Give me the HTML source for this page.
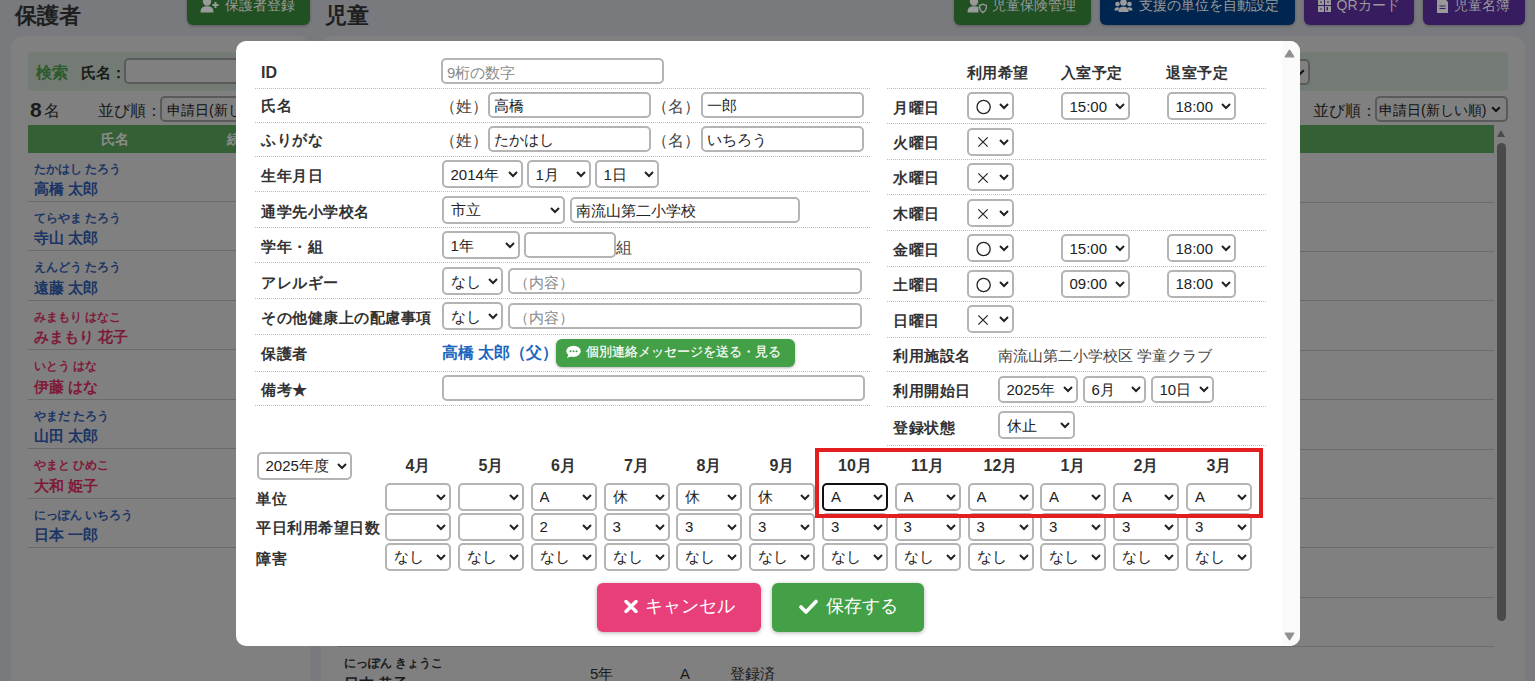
<!DOCTYPE html>
<html lang="ja"><head><meta charset="utf-8"><title>児童</title>
<style>
html,body{margin:0;padding:0;width:1535px;height:681px;overflow:hidden;background:#797a7e;font-family:"Liberation Sans",sans-serif;}
.a{position:absolute;box-sizing:border-box;margin:0}
.t{white-space:nowrap}
select.s{border:2px solid #b4b4b4;border-radius:5px;background:#fff;color:#222;font-family:"Liberation Sans",sans-serif;padding:0 0 0 3px;outline:none}
input.i{border:2px solid #b4b4b4;border-radius:5px;background:#fff;color:#222;font-family:"Liberation Sans",sans-serif;padding:3px 0 0 4px;outline:none}
input.i::placeholder{color:#8a8a8a}
.dl{position:absolute;height:0;border-top:1px dotted #bdbdbd}
</style></head><body>

<div class="a t" style="left:15px;top:-6.50px;height:44px;line-height:44px;font-size:22px;font-weight:bold;color:#1e1e1e;">保護者</div>
<div class="a" style="left:187px;top:-12px;width:123px;height:37px;background:#215023;border-radius:6px;box-shadow:0 1px 3px rgba(0,0,0,.25)"></div>
<div class="a t" style="left:225px;top:-8.80px;height:28px;line-height:28px;font-size:14px;font-weight:normal;color:#9a9a9a;">保護者登録</div>
<svg class="a" style="left:200px;top:-2px" width="20" height="16" viewBox="0 0 20 16"><circle cx="7" cy="3.5" r="4.2" fill="#9a9a9a"/><path d="M0.5 14.5 C0.5 9.5 3 8.2 7 8.2 C11 8.2 13.5 9.5 13.5 14.5 Z" fill="#9a9a9a"/><path d="M15.5 4 V10 M12.5 7 H18.5" stroke="#9a9a9a" stroke-width="2"/></svg>
<div class="a t" style="left:325px;top:-6.50px;height:44px;line-height:44px;font-size:22px;font-weight:bold;color:#1e1e1e;">児童</div>
<div class="a" style="left:954px;top:-12px;width:137px;height:37px;background:#215023;border-radius:6px;box-shadow:0 1px 3px rgba(0,0,0,.25)"></div>
<div class="a t" style="left:992px;top:-8.80px;height:28px;line-height:28px;font-size:14px;font-weight:normal;color:#9a9a9a;">児童保険管理</div>
<svg class="a" style="left:967px;top:-2px" width="20" height="16" viewBox="0 0 20 16"><circle cx="7" cy="3.5" r="4.2" fill="#9a9a9a"/><path d="M0.5 14.5 C0.5 9.5 3 8.2 7 8.2 C9 8.2 10.5 8.5 11.5 9 L11.5 14.5 Z" fill="#9a9a9a"/><path d="M12.5 7.5 L16 6.2 L19.5 7.5 C19.5 11 18 13.5 16 14.5 C14 13.5 12.5 11 12.5 7.5 Z" fill="none" stroke="#9a9a9a" stroke-width="1.4"/></svg>
<div class="a" style="left:1100px;top:-12px;width:195px;height:37px;background:#00264f;border-radius:6px;box-shadow:0 1px 3px rgba(0,0,0,.25)"></div>
<div class="a t" style="left:1138.5px;top:-9.00px;height:28.4px;line-height:28.4px;font-size:14.2px;font-weight:normal;color:#9a9a9a;">支援の単位を自動設定</div>
<svg class="a" style="left:1114px;top:-1px" width="19" height="14" viewBox="0 0 19 14"><circle cx="9.5" cy="3.5" r="3.3" fill="#9a9a9a"/><circle cx="3.5" cy="5" r="2.3" fill="#9a9a9a"/><circle cx="15.5" cy="5" r="2.3" fill="#9a9a9a"/><path d="M4.5 13 C4.5 9 6.5 7.8 9.5 7.8 C12.5 7.8 14.5 9 14.5 13 Z" fill="#9a9a9a"/><path d="M0.5 11.5 C0.5 9 1.5 8.2 3.5 8.2 C4.5 8.2 5 8.4 5.5 8.8 L4.2 11.5 Z M18.5 11.5 C18.5 9 17.5 8.2 15.5 8.2 C14.5 8.2 14 8.4 13.5 8.8 L14.8 11.5 Z" fill="#9a9a9a"/></svg>
<div class="a" style="left:1304px;top:-12px;width:110px;height:37px;background:#371d5f;border-radius:6px;box-shadow:0 1px 3px rgba(0,0,0,.25)"></div>
<div class="a t" style="left:1336.5px;top:-8.80px;height:28px;line-height:28px;font-size:14px;font-weight:normal;color:#9a9a9a;">QRカード</div>
<svg class="a" style="left:1318px;top:-1px" width="14" height="14" viewBox="0 0 14 14"><rect x="0" y="0" width="6" height="6" fill="#9a9a9a"/><rect x="7" y="0" width="6" height="6" fill="#9a9a9a"/><rect x="0" y="7" width="6" height="6" fill="#9a9a9a"/><path d="M7 7 H13 V13 H7 Z" fill="#9a9a9a"/><rect x="2.3" y="2.3" width="1.4" height="1.4" fill="#371d5f"/><rect x="9.3" y="2.3" width="1.4" height="1.4" fill="#371d5f"/><rect x="2.3" y="9.3" width="1.4" height="1.4" fill="#371d5f"/><rect x="8.5" y="8" width="1.5" height="3.5" fill="#371d5f"/></svg>
<div class="a" style="left:1423px;top:-12px;width:102px;height:37px;background:#371d5f;border-radius:6px;box-shadow:0 1px 3px rgba(0,0,0,.25)"></div>
<div class="a t" style="left:1453.5px;top:-8.80px;height:28px;line-height:28px;font-size:14px;font-weight:normal;color:#9a9a9a;">児童名簿</div>
<svg class="a" style="left:1437px;top:-2px" width="11" height="15" viewBox="0 0 11 15"><path d="M0 0 H7 L11 4 V15 H0 Z" fill="#9a9a9a"/><path d="M2.5 8 H8.5 M2.5 10.5 H8.5" stroke="#371d5f" stroke-width="1"/></svg>
<div class="a" style="left:11px;top:36px;width:299px;height:764px;background:#808080;border-radius:12px"></div>
<div class="a" style="left:28px;top:52px;width:265px;height:39px;background:#747a74;border-radius:4px"></div>
<div class="a t" style="left:36px;top:56.50px;height:32px;line-height:32px;font-size:16px;font-weight:bold;color:#2a5a2c;">検索</div>
<div class="a t" style="left:81px;top:58.00px;height:30px;line-height:30px;font-size:15px;font-weight:bold;color:#1a1a1a;">氏名：</div>
<div class="a" style="left:124px;top:58px;width:169px;height:26px;border:2px solid #5a5a5a;border-radius:5px;background:#808080"></div>
<div class="a t" style="left:30px;top:88.50px;height:42px;line-height:42px;font-size:21px;font-weight:bold;color:#1a1a1a;">8</div>
<div class="a t" style="left:44px;top:95.00px;height:32px;line-height:32px;font-size:16px;font-weight:normal;color:#1a1a1a;">名</div>
<div class="a t" style="left:98px;top:94.50px;height:32px;line-height:32px;font-size:16px;font-weight:normal;color:#1a1a1a;">並び順：</div>
<div class="a" style="left:160px;top:96px;width:133px;height:26px;border:2px solid #5a5a5a;border-radius:5px;background:#808080"></div>
<div class="a t" style="left:167px;top:96.20px;height:28px;line-height:28px;font-size:14px;font-weight:normal;color:#111;">申請日(新しい順)</div>
<div class="a" style="left:28px;top:125px;width:265px;height:28px;background:#356035"></div>
<div class="a t" style="left:-85px;width:400px;text-align:center;top:125.00px;height:28px;line-height:28px;font-size:14px;font-weight:bold;color:#8a8a8a;">氏名</div>
<div class="a t" style="left:227px;top:125.00px;height:28px;line-height:28px;font-size:14px;font-weight:bold;color:#8a8a8a;">続柄</div>
<div class="a t" style="left:34px;top:156.50px;height:24px;line-height:24px;font-size:12px;font-weight:bold;color:#1a3564;">たかはし たろう</div>
<div class="a t" style="left:34px;top:174.00px;height:30px;line-height:30px;font-size:15px;font-weight:bold;color:#1a3564;">高橋 太郎</div>
<div class="a" style="left:28px;top:201px;width:265px;height:1px;background:#6b6b6b"></div>
<div class="a t" style="left:34px;top:205.95px;height:24px;line-height:24px;font-size:12px;font-weight:bold;color:#1a3564;">てらやま たろう</div>
<div class="a t" style="left:34px;top:223.45px;height:30px;line-height:30px;font-size:15px;font-weight:bold;color:#1a3564;">寺山 太郎</div>
<div class="a" style="left:28px;top:250px;width:265px;height:1px;background:#6b6b6b"></div>
<div class="a t" style="left:34px;top:255.40px;height:24px;line-height:24px;font-size:12px;font-weight:bold;color:#1a3564;">えんどう たろう</div>
<div class="a t" style="left:34px;top:272.90px;height:30px;line-height:30px;font-size:15px;font-weight:bold;color:#1a3564;">遠藤 太郎</div>
<div class="a" style="left:28px;top:300px;width:265px;height:1px;background:#6b6b6b"></div>
<div class="a t" style="left:34px;top:304.85px;height:24px;line-height:24px;font-size:12px;font-weight:bold;color:#7e1a38;">みまもり はなこ</div>
<div class="a t" style="left:34px;top:322.35px;height:30px;line-height:30px;font-size:15px;font-weight:bold;color:#7e1a38;">みまもり 花子</div>
<div class="a" style="left:28px;top:349px;width:265px;height:1px;background:#6b6b6b"></div>
<div class="a t" style="left:34px;top:354.30px;height:24px;line-height:24px;font-size:12px;font-weight:bold;color:#7e1a38;">いとう はな</div>
<div class="a t" style="left:34px;top:371.80px;height:30px;line-height:30px;font-size:15px;font-weight:bold;color:#7e1a38;">伊藤 はな</div>
<div class="a" style="left:28px;top:399px;width:265px;height:1px;background:#6b6b6b"></div>
<div class="a t" style="left:34px;top:403.75px;height:24px;line-height:24px;font-size:12px;font-weight:bold;color:#1a3564;">やまだ たろう</div>
<div class="a t" style="left:34px;top:421.25px;height:30px;line-height:30px;font-size:15px;font-weight:bold;color:#1a3564;">山田 太郎</div>
<div class="a" style="left:28px;top:448px;width:265px;height:1px;background:#6b6b6b"></div>
<div class="a t" style="left:34px;top:453.20px;height:24px;line-height:24px;font-size:12px;font-weight:bold;color:#7e1a38;">やまと ひめこ</div>
<div class="a t" style="left:34px;top:470.70px;height:30px;line-height:30px;font-size:15px;font-weight:bold;color:#7e1a38;">大和 姫子</div>
<div class="a" style="left:28px;top:498px;width:265px;height:1px;background:#6b6b6b"></div>
<div class="a t" style="left:34px;top:502.65px;height:24px;line-height:24px;font-size:12px;font-weight:bold;color:#1a3564;">にっぽん いちろう</div>
<div class="a t" style="left:34px;top:520.15px;height:30px;line-height:30px;font-size:15px;font-weight:bold;color:#1a3564;">日本 一郎</div>
<div class="a" style="left:28px;top:547px;width:265px;height:1px;background:#6b6b6b"></div>
<div class="a" style="left:321px;top:36px;width:1204px;height:764px;background:#808080;border-radius:12px"></div>
<div class="a" style="left:338px;top:52px;width:1170px;height:39px;background:#747a74;border-radius:4px"></div>
<div class="a" style="left:1200px;top:59px;width:110px;height:26px;border:2px solid #5a5a5a;border-radius:5px;background:#808080"></div>
<div class="a t" style="left:1313px;top:94.50px;height:32px;line-height:32px;font-size:16px;font-weight:normal;color:#1a1a1a;">並び順：</div>
<div class="a" style="left:1375px;top:96px;width:133px;height:26px;border:2px solid #5a5a5a;border-radius:5px;background:#808080"></div>
<div class="a t" style="left:1379px;top:96.20px;height:28px;line-height:28px;font-size:14px;font-weight:normal;color:#111;">申請日(新しい順)</div>
<svg class="a" style="left:1491px;top:106px" width="10" height="7" viewBox="0 0 10 7"><path d="M1.2 1.2 L5 5 L8.8 1.2" stroke="#111" stroke-width="2" fill="none"/></svg>
<svg class="a" style="left:1295px;top:69px" width="10" height="7" viewBox="0 0 10 7"><path d="M1.2 1.2 L5 5 L8.8 1.2" stroke="#111" stroke-width="2" fill="none"/></svg>
<div class="a" style="left:338px;top:125px;width:1156px;height:28px;background:#356035"></div>
<div class="a" style="left:1497px;top:130px;width:0;height:0;border-left:4.5px solid transparent;border-right:4.5px solid transparent;border-bottom:7px solid #4a4a4a"></div>
<div class="a" style="left:1497px;top:143px;width:9px;height:478px;background:#4a4a4a;border-radius:5px"></div>
<div class="a" style="left:338px;top:202px;width:1156px;height:1px;background:#6b6b6b"></div>
<div class="a" style="left:338px;top:251px;width:1156px;height:1px;background:#6b6b6b"></div>
<div class="a" style="left:338px;top:300px;width:1156px;height:1px;background:#6b6b6b"></div>
<div class="a" style="left:338px;top:350px;width:1156px;height:1px;background:#6b6b6b"></div>
<div class="a" style="left:338px;top:399px;width:1156px;height:1px;background:#6b6b6b"></div>
<div class="a" style="left:338px;top:449px;width:1156px;height:1px;background:#6b6b6b"></div>
<div class="a" style="left:338px;top:498px;width:1156px;height:1px;background:#6b6b6b"></div>
<div class="a" style="left:338px;top:547px;width:1156px;height:1px;background:#6b6b6b"></div>
<div class="a" style="left:338px;top:597px;width:1156px;height:1px;background:#6b6b6b"></div>
<div class="a" style="left:338px;top:646px;width:1156px;height:1px;background:#6b6b6b"></div>
<div class="a t" style="left:344px;top:650.50px;height:24px;line-height:24px;font-size:12px;font-weight:bold;color:#1a1a1a;">にっぽん きょうこ</div>
<div class="a t" style="left:344px;top:669.00px;height:30px;line-height:30px;font-size:15px;font-weight:bold;color:#1a1a1a;">日本 恭子</div>
<div class="a t" style="left:590px;top:659.00px;height:30px;line-height:30px;font-size:15px;font-weight:normal;color:#1a1a1a;">5年</div>
<div class="a t" style="left:680px;top:659.00px;height:30px;line-height:30px;font-size:15px;font-weight:normal;color:#1a1a1a;">A</div>
<div class="a t" style="left:730px;top:659.00px;height:30px;line-height:30px;font-size:15px;font-weight:normal;color:#1a1a1a;">登録済</div>
<div class="a" style="left:236px;top:41px;width:1064px;height:605px;background:#fff;border-radius:10px;overflow:hidden">
<div class="a" style="left:1046px;top:0;width:18px;height:605px;background:#fafafa"></div>
<svg class="a" style="left:1048px;top:7.5px" width="11" height="9" viewBox="0 0 11 9"><path d="M5.5 1.2 L9.8 7.8 L1.2 7.8 Z" fill="#8f8f8f" stroke="#8f8f8f" stroke-width="1.2" stroke-linejoin="round"/></svg>
<svg class="a" style="left:1048px;top:590.5px" width="11" height="9" viewBox="0 0 11 9"><path d="M5.5 7.8 L9.8 1.2 L1.2 1.2 Z" fill="#8f8f8f" stroke="#8f8f8f" stroke-width="1.2" stroke-linejoin="round"/></svg>
</div>
<div class="dl" style="left:255px;top:88px;width:615px"></div>
<div class="dl" style="left:255px;top:122px;width:615px"></div>
<div class="dl" style="left:255px;top:156px;width:615px"></div>
<div class="dl" style="left:255px;top:191px;width:615px"></div>
<div class="dl" style="left:255px;top:227px;width:615px"></div>
<div class="dl" style="left:255px;top:262px;width:615px"></div>
<div class="dl" style="left:255px;top:298px;width:615px"></div>
<div class="dl" style="left:255px;top:334px;width:615px"></div>
<div class="dl" style="left:255px;top:371px;width:615px"></div>
<div class="dl" style="left:255px;top:405px;width:615px"></div>
<div class="dl" style="left:887px;top:88px;width:379px"></div>
<div class="dl" style="left:887px;top:123px;width:379px"></div>
<div class="dl" style="left:887px;top:159px;width:379px"></div>
<div class="dl" style="left:887px;top:194px;width:379px"></div>
<div class="dl" style="left:887px;top:230px;width:379px"></div>
<div class="dl" style="left:887px;top:266px;width:379px"></div>
<div class="dl" style="left:887px;top:301px;width:379px"></div>
<div class="dl" style="left:887px;top:337px;width:379px"></div>
<div class="dl" style="left:887px;top:371px;width:379px"></div>
<div class="dl" style="left:887px;top:406px;width:379px"></div>
<div class="dl" style="left:887px;top:445px;width:379px"></div>
<div class="a t" style="left:261px;top:57.30px;height:32px;line-height:32px;font-size:16px;font-weight:bold;color:#333;">ID</div>
<div class="a t" style="left:261px;top:91.40px;height:30px;line-height:30px;font-size:15px;font-weight:bold;color:#333;letter-spacing:.5px">氏名</div>
<div class="a t" style="left:261px;top:124.60px;height:30px;line-height:30px;font-size:15px;font-weight:bold;color:#333;letter-spacing:.5px">ふりがな</div>
<div class="a t" style="left:261px;top:160.60px;height:30px;line-height:30px;font-size:15px;font-weight:bold;color:#333;letter-spacing:.5px">生年月日</div>
<div class="a t" style="left:261px;top:196.60px;height:30px;line-height:30px;font-size:15px;font-weight:bold;color:#333;letter-spacing:.5px">通学先小学校名</div>
<div class="a t" style="left:261px;top:231.60px;height:30px;line-height:30px;font-size:15px;font-weight:bold;color:#333;letter-spacing:.5px">学年・組</div>
<div class="a t" style="left:261px;top:267.60px;height:30px;line-height:30px;font-size:15px;font-weight:bold;color:#333;letter-spacing:.5px">アレルギー</div>
<div class="a t" style="left:261px;top:302.60px;height:30px;line-height:30px;font-size:15px;font-weight:bold;color:#333;letter-spacing:.5px">その他健康上の配慮事項</div>
<div class="a t" style="left:261px;top:339.10px;height:30px;line-height:30px;font-size:15px;font-weight:bold;color:#333;letter-spacing:.5px">保護者</div>
<div class="a t" style="left:261px;top:375.10px;height:30px;line-height:30px;font-size:15px;font-weight:bold;color:#333;letter-spacing:.5px">備考★</div>
<input class="a i" style="left:441px;top:58.00px;width:222.50px;height:26.00px;font-size:15px;border-color:#b4b4b4;" value="" placeholder="9桁の数字">
<div class="a t" style="left:440px;top:91.40px;height:32px;line-height:32px;font-size:16px;font-weight:normal;color:#444;">（姓）</div>
<input class="a i" style="left:487.5px;top:92.00px;width:163.00px;height:26.00px;font-size:15px;border-color:#b4b4b4;" value="高橋" placeholder="">
<div class="a t" style="left:652px;top:91.40px;height:32px;line-height:32px;font-size:16px;font-weight:normal;color:#444;">（名）</div>
<input class="a i" style="left:701px;top:92.00px;width:162.50px;height:26.00px;font-size:15px;border-color:#b4b4b4;" value="一郎" placeholder="">
<div class="a t" style="left:440px;top:125.40px;height:32px;line-height:32px;font-size:16px;font-weight:normal;color:#444;">（姓）</div>
<input class="a i" style="left:487.5px;top:126.25px;width:163.00px;height:26.00px;font-size:15px;border-color:#b4b4b4;" value="たかはし" placeholder="">
<div class="a t" style="left:652px;top:125.40px;height:32px;line-height:32px;font-size:16px;font-weight:normal;color:#444;">（名）</div>
<input class="a i" style="left:701px;top:126.25px;width:162.50px;height:26.00px;font-size:15px;border-color:#b4b4b4;" value="いちろう" placeholder="">
<select class="a s" style="left:441.5px;top:160.25px;width:81.00px;height:27.50px;font-size:15px;border-color:#b4b4b4;"><option>2014年</option></select>
<select class="a s" style="left:526.5px;top:160.25px;width:64.00px;height:27.50px;font-size:15px;border-color:#b4b4b4;"><option>1月</option></select>
<select class="a s" style="left:594.5px;top:160.25px;width:64.00px;height:27.50px;font-size:15px;border-color:#b4b4b4;"><option>1日</option></select>
<select class="a s" style="left:441.5px;top:196.00px;width:123.50px;height:27.50px;font-size:15px;border-color:#b4b4b4;"><option>市立</option></select>
<input class="a i" style="left:569.5px;top:197.00px;width:230.00px;height:26.00px;font-size:15px;border-color:#b4b4b4;" value="南流山第二小学校" placeholder="">
<select class="a s" style="left:441.5px;top:231.25px;width:78.00px;height:27.50px;font-size:15px;border-color:#b4b4b4;"><option>1年</option></select>
<input class="a i" style="left:523.5px;top:232.00px;width:92.00px;height:26.00px;font-size:15px;border-color:#b4b4b4;" value="" placeholder="">
<div class="a t" style="left:616px;top:231.60px;height:32px;line-height:32px;font-size:16px;font-weight:normal;color:#444;">組</div>
<select class="a s" style="left:441.5px;top:267.25px;width:61.50px;height:27.50px;font-size:15px;border-color:#b4b4b4;"><option>なし</option></select>
<input class="a i" style="left:507.5px;top:268.00px;width:354.00px;height:26.00px;font-size:15px;border-color:#b4b4b4;" value="" placeholder="（内容）">
<select class="a s" style="left:441.5px;top:302.25px;width:61.50px;height:27.50px;font-size:15px;border-color:#b4b4b4;"><option>なし</option></select>
<input class="a i" style="left:507.5px;top:303.00px;width:354.00px;height:26.00px;font-size:15px;border-color:#b4b4b4;" value="" placeholder="（内容）">
<div class="a t" style="left:442px;top:336.60px;height:31.0px;line-height:31.0px;font-size:15.5px;font-weight:bold;color:#1a66bd;">高橋 太郎（父）</div>
<div class="a" style="left:556px;top:338.5px;width:239px;height:28.5px;background:#43a047;border-radius:6px;box-shadow:0 1px 3px rgba(0,0,0,.3)"></div>
<svg class="a" style="left:566px;top:345px" width="15" height="14" viewBox="0 0 15 14"><ellipse cx="7.5" cy="6.3" rx="7.2" ry="5.6" fill="#fff"/><path d="M2.5 9.5 L1 13 L6 11 Z" fill="#fff"/><circle cx="4.5" cy="6.3" r="1" fill="#43a047"/><circle cx="7.5" cy="6.3" r="1" fill="#43a047"/><circle cx="10.5" cy="6.3" r="1" fill="#43a047"/></svg>
<div class="a t" style="left:586px;top:339.30px;height:26px;line-height:26px;font-size:13px;font-weight:normal;color:#fff;-webkit-text-stroke:0.2px #fff">個別連絡メッセージを送る・見る</div>
<input class="a i" style="left:441.5px;top:375.00px;width:423.00px;height:26.00px;font-size:15px;border-color:#b4b4b4;" value="" placeholder="">
<div class="a t" style="left:966.6px;top:58.40px;height:30px;line-height:30px;font-size:15px;font-weight:bold;color:#333;letter-spacing:.5px">利用希望</div>
<div class="a t" style="left:1060.6px;top:58.40px;height:30px;line-height:30px;font-size:15px;font-weight:bold;color:#333;letter-spacing:.5px">入室予定</div>
<div class="a t" style="left:1166.3px;top:58.40px;height:30px;line-height:30px;font-size:15px;font-weight:bold;color:#333;letter-spacing:.5px">退室予定</div>
<div class="a t" style="left:893px;top:92.50px;height:30px;line-height:30px;font-size:15px;font-weight:bold;color:#333;letter-spacing:.5px">月曜日</div>
<select class="a s" style="left:966.5px;top:92.35px;width:47.00px;height:27.50px;font-size:15px;border-color:#b4b4b4;"><option></option></select>
<svg class="a" style="left:974.5px;top:98.9px" width="17" height="16" viewBox="0 0 17 16"><circle cx="8.6" cy="8" r="6.6" fill="none" stroke="#222" stroke-width="1.3"/></svg>
<select class="a s" style="left:1060.5px;top:92.35px;width:69.50px;height:27.50px;font-size:15px;border-color:#b4b4b4;"><option>15:00</option></select>
<select class="a s" style="left:1166.5px;top:92.35px;width:69.00px;height:27.50px;font-size:15px;border-color:#b4b4b4;"><option>18:00</option></select>
<div class="a t" style="left:893px;top:128.15px;height:30px;line-height:30px;font-size:15px;font-weight:bold;color:#333;letter-spacing:.5px">火曜日</div>
<select class="a s" style="left:966.5px;top:128.00px;width:47.00px;height:27.50px;font-size:15px;border-color:#b4b4b4;"><option></option></select>
<svg class="a" style="left:977px;top:136.4px" width="12" height="12" viewBox="0 0 12 12"><path d="M1.3 1.3 L10.7 10.7 M10.7 1.3 L1.3 10.7" stroke="#222" stroke-width="1.2"/></svg>
<div class="a t" style="left:893px;top:163.40px;height:30px;line-height:30px;font-size:15px;font-weight:bold;color:#333;letter-spacing:.5px">水曜日</div>
<select class="a s" style="left:966.5px;top:163.25px;width:47.00px;height:27.50px;font-size:15px;border-color:#b4b4b4;"><option></option></select>
<svg class="a" style="left:977px;top:171.7px" width="12" height="12" viewBox="0 0 12 12"><path d="M1.3 1.3 L10.7 10.7 M10.7 1.3 L1.3 10.7" stroke="#222" stroke-width="1.2"/></svg>
<div class="a t" style="left:893px;top:199.20px;height:30px;line-height:30px;font-size:15px;font-weight:bold;color:#333;letter-spacing:.5px">木曜日</div>
<select class="a s" style="left:966.5px;top:199.05px;width:47.00px;height:27.50px;font-size:15px;border-color:#b4b4b4;"><option></option></select>
<svg class="a" style="left:977px;top:207.5px" width="12" height="12" viewBox="0 0 12 12"><path d="M1.3 1.3 L10.7 10.7 M10.7 1.3 L1.3 10.7" stroke="#222" stroke-width="1.2"/></svg>
<div class="a t" style="left:893px;top:234.60px;height:30px;line-height:30px;font-size:15px;font-weight:bold;color:#333;letter-spacing:.5px">金曜日</div>
<select class="a s" style="left:966.5px;top:234.45px;width:47.00px;height:27.50px;font-size:15px;border-color:#b4b4b4;"><option></option></select>
<svg class="a" style="left:974.5px;top:241.0px" width="17" height="16" viewBox="0 0 17 16"><circle cx="8.6" cy="8" r="6.6" fill="none" stroke="#222" stroke-width="1.3"/></svg>
<select class="a s" style="left:1060.5px;top:234.45px;width:69.50px;height:27.50px;font-size:15px;border-color:#b4b4b4;"><option>15:00</option></select>
<select class="a s" style="left:1166.5px;top:234.45px;width:69.00px;height:27.50px;font-size:15px;border-color:#b4b4b4;"><option>18:00</option></select>
<div class="a t" style="left:893px;top:270.20px;height:30px;line-height:30px;font-size:15px;font-weight:bold;color:#333;letter-spacing:.5px">土曜日</div>
<select class="a s" style="left:966.5px;top:270.05px;width:47.00px;height:27.50px;font-size:15px;border-color:#b4b4b4;"><option></option></select>
<svg class="a" style="left:974.5px;top:276.6px" width="17" height="16" viewBox="0 0 17 16"><circle cx="8.6" cy="8" r="6.6" fill="none" stroke="#222" stroke-width="1.3"/></svg>
<select class="a s" style="left:1060.5px;top:270.05px;width:69.50px;height:27.50px;font-size:15px;border-color:#b4b4b4;"><option>09:00</option></select>
<select class="a s" style="left:1166.5px;top:270.05px;width:69.00px;height:27.50px;font-size:15px;border-color:#b4b4b4;"><option>18:00</option></select>
<div class="a t" style="left:893px;top:305.60px;height:30px;line-height:30px;font-size:15px;font-weight:bold;color:#333;letter-spacing:.5px">日曜日</div>
<select class="a s" style="left:966.5px;top:305.45px;width:47.00px;height:27.50px;font-size:15px;border-color:#b4b4b4;"><option></option></select>
<svg class="a" style="left:977px;top:313.9px" width="12" height="12" viewBox="0 0 12 12"><path d="M1.3 1.3 L10.7 10.7 M10.7 1.3 L1.3 10.7" stroke="#222" stroke-width="1.2"/></svg>
<div class="a t" style="left:893px;top:340.60px;height:30px;line-height:30px;font-size:15px;font-weight:bold;color:#333;letter-spacing:.5px">利用施設名</div>
<div class="a t" style="left:997.5px;top:341.10px;height:30px;line-height:30px;font-size:15px;font-weight:normal;color:#444;">南流山第二小学校区 学童クラブ</div>
<div class="a t" style="left:893px;top:375.60px;height:30px;line-height:30px;font-size:15px;font-weight:bold;color:#333;letter-spacing:.5px">利用開始日</div>
<select class="a s" style="left:997.5px;top:375.50px;width:80.50px;height:27.50px;font-size:15px;border-color:#b4b4b4;"><option>2025年</option></select>
<select class="a s" style="left:1082.5px;top:375.50px;width:63.50px;height:27.50px;font-size:15px;border-color:#b4b4b4;"><option>6月</option></select>
<select class="a s" style="left:1150.5px;top:375.50px;width:63.50px;height:27.50px;font-size:15px;border-color:#b4b4b4;"><option>10日</option></select>
<div class="a t" style="left:893px;top:413.10px;height:30px;line-height:30px;font-size:15px;font-weight:bold;color:#333;letter-spacing:.5px">登録状態</div>
<select class="a s" style="left:997.5px;top:411.25px;width:77.50px;height:27.50px;font-size:15px;border-color:#b4b4b4;"><option>休止</option></select>
<select class="a s" style="left:256.5px;top:452.00px;width:95.50px;height:27.50px;font-size:15px;border-color:#b4b4b4;"><option>2025年度</option></select>
<div class="a t" style="left:218.0px;width:400px;text-align:center;top:450.00px;height:32px;line-height:32px;font-size:16px;font-weight:bold;color:#333;">4月</div>
<select class="a s" style="left:385.0px;top:483.15px;width:66.00px;height:27.50px;font-size:15px;border-color:#b4b4b4;"><option></option></select>
<select class="a s" style="left:385.0px;top:513.20px;width:66.00px;height:27.50px;font-size:15px;border-color:#b4b4b4;"><option></option></select>
<select class="a s" style="left:385.0px;top:543.15px;width:66.00px;height:27.50px;font-size:15px;border-color:#b4b4b4;"><option>なし</option></select>
<div class="a t" style="left:291.0px;width:400px;text-align:center;top:450.00px;height:32px;line-height:32px;font-size:16px;font-weight:bold;color:#333;">5月</div>
<select class="a s" style="left:458.0px;top:483.15px;width:66.00px;height:27.50px;font-size:15px;border-color:#b4b4b4;"><option></option></select>
<select class="a s" style="left:458.0px;top:513.20px;width:66.00px;height:27.50px;font-size:15px;border-color:#b4b4b4;"><option></option></select>
<select class="a s" style="left:458.0px;top:543.15px;width:66.00px;height:27.50px;font-size:15px;border-color:#b4b4b4;"><option>なし</option></select>
<div class="a t" style="left:363.5px;width:400px;text-align:center;top:450.00px;height:32px;line-height:32px;font-size:16px;font-weight:bold;color:#333;">6月</div>
<select class="a s" style="left:530.5px;top:483.15px;width:66.00px;height:27.50px;font-size:15px;border-color:#b4b4b4;"><option>A</option></select>
<select class="a s" style="left:530.5px;top:513.20px;width:66.00px;height:27.50px;font-size:15px;border-color:#b4b4b4;"><option>2</option></select>
<select class="a s" style="left:530.5px;top:543.15px;width:66.00px;height:27.50px;font-size:15px;border-color:#b4b4b4;"><option>なし</option></select>
<div class="a t" style="left:436.5px;width:400px;text-align:center;top:450.00px;height:32px;line-height:32px;font-size:16px;font-weight:bold;color:#333;">7月</div>
<select class="a s" style="left:603.5px;top:483.15px;width:66.00px;height:27.50px;font-size:15px;border-color:#b4b4b4;"><option>休</option></select>
<select class="a s" style="left:603.5px;top:513.20px;width:66.00px;height:27.50px;font-size:15px;border-color:#b4b4b4;"><option>3</option></select>
<select class="a s" style="left:603.5px;top:543.15px;width:66.00px;height:27.50px;font-size:15px;border-color:#b4b4b4;"><option>なし</option></select>
<div class="a t" style="left:509.0px;width:400px;text-align:center;top:450.00px;height:32px;line-height:32px;font-size:16px;font-weight:bold;color:#333;">8月</div>
<select class="a s" style="left:676.0px;top:483.15px;width:66.00px;height:27.50px;font-size:15px;border-color:#b4b4b4;"><option>休</option></select>
<select class="a s" style="left:676.0px;top:513.20px;width:66.00px;height:27.50px;font-size:15px;border-color:#b4b4b4;"><option>3</option></select>
<select class="a s" style="left:676.0px;top:543.15px;width:66.00px;height:27.50px;font-size:15px;border-color:#b4b4b4;"><option>なし</option></select>
<div class="a t" style="left:582.0px;width:400px;text-align:center;top:450.00px;height:32px;line-height:32px;font-size:16px;font-weight:bold;color:#333;">9月</div>
<select class="a s" style="left:749.0px;top:483.15px;width:66.00px;height:27.50px;font-size:15px;border-color:#b4b4b4;"><option>休</option></select>
<select class="a s" style="left:749.0px;top:513.20px;width:66.00px;height:27.50px;font-size:15px;border-color:#b4b4b4;"><option>3</option></select>
<select class="a s" style="left:749.0px;top:543.15px;width:66.00px;height:27.50px;font-size:15px;border-color:#b4b4b4;"><option>なし</option></select>
<div class="a t" style="left:655.0px;width:400px;text-align:center;top:450.00px;height:32px;line-height:32px;font-size:16px;font-weight:bold;color:#333;">10月</div>
<select class="a s" style="left:822.0px;top:483.15px;width:66.00px;height:27.50px;font-size:15px;border-color:#111;"><option>A</option></select>
<select class="a s" style="left:822.0px;top:513.20px;width:66.00px;height:27.50px;font-size:15px;border-color:#b4b4b4;"><option>3</option></select>
<select class="a s" style="left:822.0px;top:543.15px;width:66.00px;height:27.50px;font-size:15px;border-color:#b4b4b4;"><option>なし</option></select>
<div class="a t" style="left:727.5px;width:400px;text-align:center;top:450.00px;height:32px;line-height:32px;font-size:16px;font-weight:bold;color:#333;">11月</div>
<select class="a s" style="left:894.5px;top:483.15px;width:66.00px;height:27.50px;font-size:15px;border-color:#b4b4b4;"><option>A</option></select>
<select class="a s" style="left:894.5px;top:513.20px;width:66.00px;height:27.50px;font-size:15px;border-color:#b4b4b4;"><option>3</option></select>
<select class="a s" style="left:894.5px;top:543.15px;width:66.00px;height:27.50px;font-size:15px;border-color:#b4b4b4;"><option>なし</option></select>
<div class="a t" style="left:800.5px;width:400px;text-align:center;top:450.00px;height:32px;line-height:32px;font-size:16px;font-weight:bold;color:#333;">12月</div>
<select class="a s" style="left:967.5px;top:483.15px;width:66.00px;height:27.50px;font-size:15px;border-color:#b4b4b4;"><option>A</option></select>
<select class="a s" style="left:967.5px;top:513.20px;width:66.00px;height:27.50px;font-size:15px;border-color:#b4b4b4;"><option>3</option></select>
<select class="a s" style="left:967.5px;top:543.15px;width:66.00px;height:27.50px;font-size:15px;border-color:#b4b4b4;"><option>なし</option></select>
<div class="a t" style="left:873.0px;width:400px;text-align:center;top:450.00px;height:32px;line-height:32px;font-size:16px;font-weight:bold;color:#333;">1月</div>
<select class="a s" style="left:1040.0px;top:483.15px;width:66.00px;height:27.50px;font-size:15px;border-color:#b4b4b4;"><option>A</option></select>
<select class="a s" style="left:1040.0px;top:513.20px;width:66.00px;height:27.50px;font-size:15px;border-color:#b4b4b4;"><option>3</option></select>
<select class="a s" style="left:1040.0px;top:543.15px;width:66.00px;height:27.50px;font-size:15px;border-color:#b4b4b4;"><option>なし</option></select>
<div class="a t" style="left:946.0px;width:400px;text-align:center;top:450.00px;height:32px;line-height:32px;font-size:16px;font-weight:bold;color:#333;">2月</div>
<select class="a s" style="left:1113.0px;top:483.15px;width:66.00px;height:27.50px;font-size:15px;border-color:#b4b4b4;"><option>A</option></select>
<select class="a s" style="left:1113.0px;top:513.20px;width:66.00px;height:27.50px;font-size:15px;border-color:#b4b4b4;"><option>3</option></select>
<select class="a s" style="left:1113.0px;top:543.15px;width:66.00px;height:27.50px;font-size:15px;border-color:#b4b4b4;"><option>なし</option></select>
<div class="a t" style="left:1019.0px;width:400px;text-align:center;top:450.00px;height:32px;line-height:32px;font-size:16px;font-weight:bold;color:#333;">3月</div>
<select class="a s" style="left:1186.0px;top:483.15px;width:66.00px;height:27.50px;font-size:15px;border-color:#b4b4b4;"><option>A</option></select>
<select class="a s" style="left:1186.0px;top:513.20px;width:66.00px;height:27.50px;font-size:15px;border-color:#b4b4b4;"><option>3</option></select>
<select class="a s" style="left:1186.0px;top:543.15px;width:66.00px;height:27.50px;font-size:15px;border-color:#b4b4b4;"><option>なし</option></select>
<div class="a t" style="left:256px;top:483.50px;height:30px;line-height:30px;font-size:15px;font-weight:bold;color:#333;letter-spacing:.5px">単位</div>
<div class="a t" style="left:256px;top:512.50px;height:30px;line-height:30px;font-size:15px;font-weight:bold;color:#333;letter-spacing:.5px">平日利用希望日数</div>
<div class="a t" style="left:256px;top:543.50px;height:30px;line-height:30px;font-size:15px;font-weight:bold;color:#333;letter-spacing:.5px">障害</div>
<div class="a" style="left:815px;top:448px;width:448px;height:70px;border:4px solid #e41e1e"></div>
<div class="a" style="left:597px;top:583px;width:164px;height:49px;background:#e83e7a;border-radius:6px;box-shadow:0 1px 4px rgba(0,0,0,.3)"></div>
<svg class="a" style="left:624px;top:600px" width="14" height="13" viewBox="0 0 14 13"><path d="M2 1.5 L12 11.5 M12 1.5 L2 11.5" stroke="#fff" stroke-width="3.4" stroke-linecap="round"/></svg>
<div class="a t" style="left:645px;top:587.60px;height:36px;line-height:36px;font-size:18px;font-weight:normal;color:#fff;">キャンセル</div>
<div class="a" style="left:772px;top:583px;width:152px;height:49px;background:#43a047;border-radius:6px;box-shadow:0 1px 4px rgba(0,0,0,.3)"></div>
<svg class="a" style="left:799px;top:599px" width="19" height="15" viewBox="0 0 19 15"><path d="M2 8 L7 13 L17 2.5" stroke="#fff" stroke-width="3.6" fill="none" stroke-linecap="round" stroke-linejoin="round"/></svg>
<div class="a t" style="left:826px;top:587.60px;height:36px;line-height:36px;font-size:18px;font-weight:normal;color:#fff;">保存する</div>
</body></html>
